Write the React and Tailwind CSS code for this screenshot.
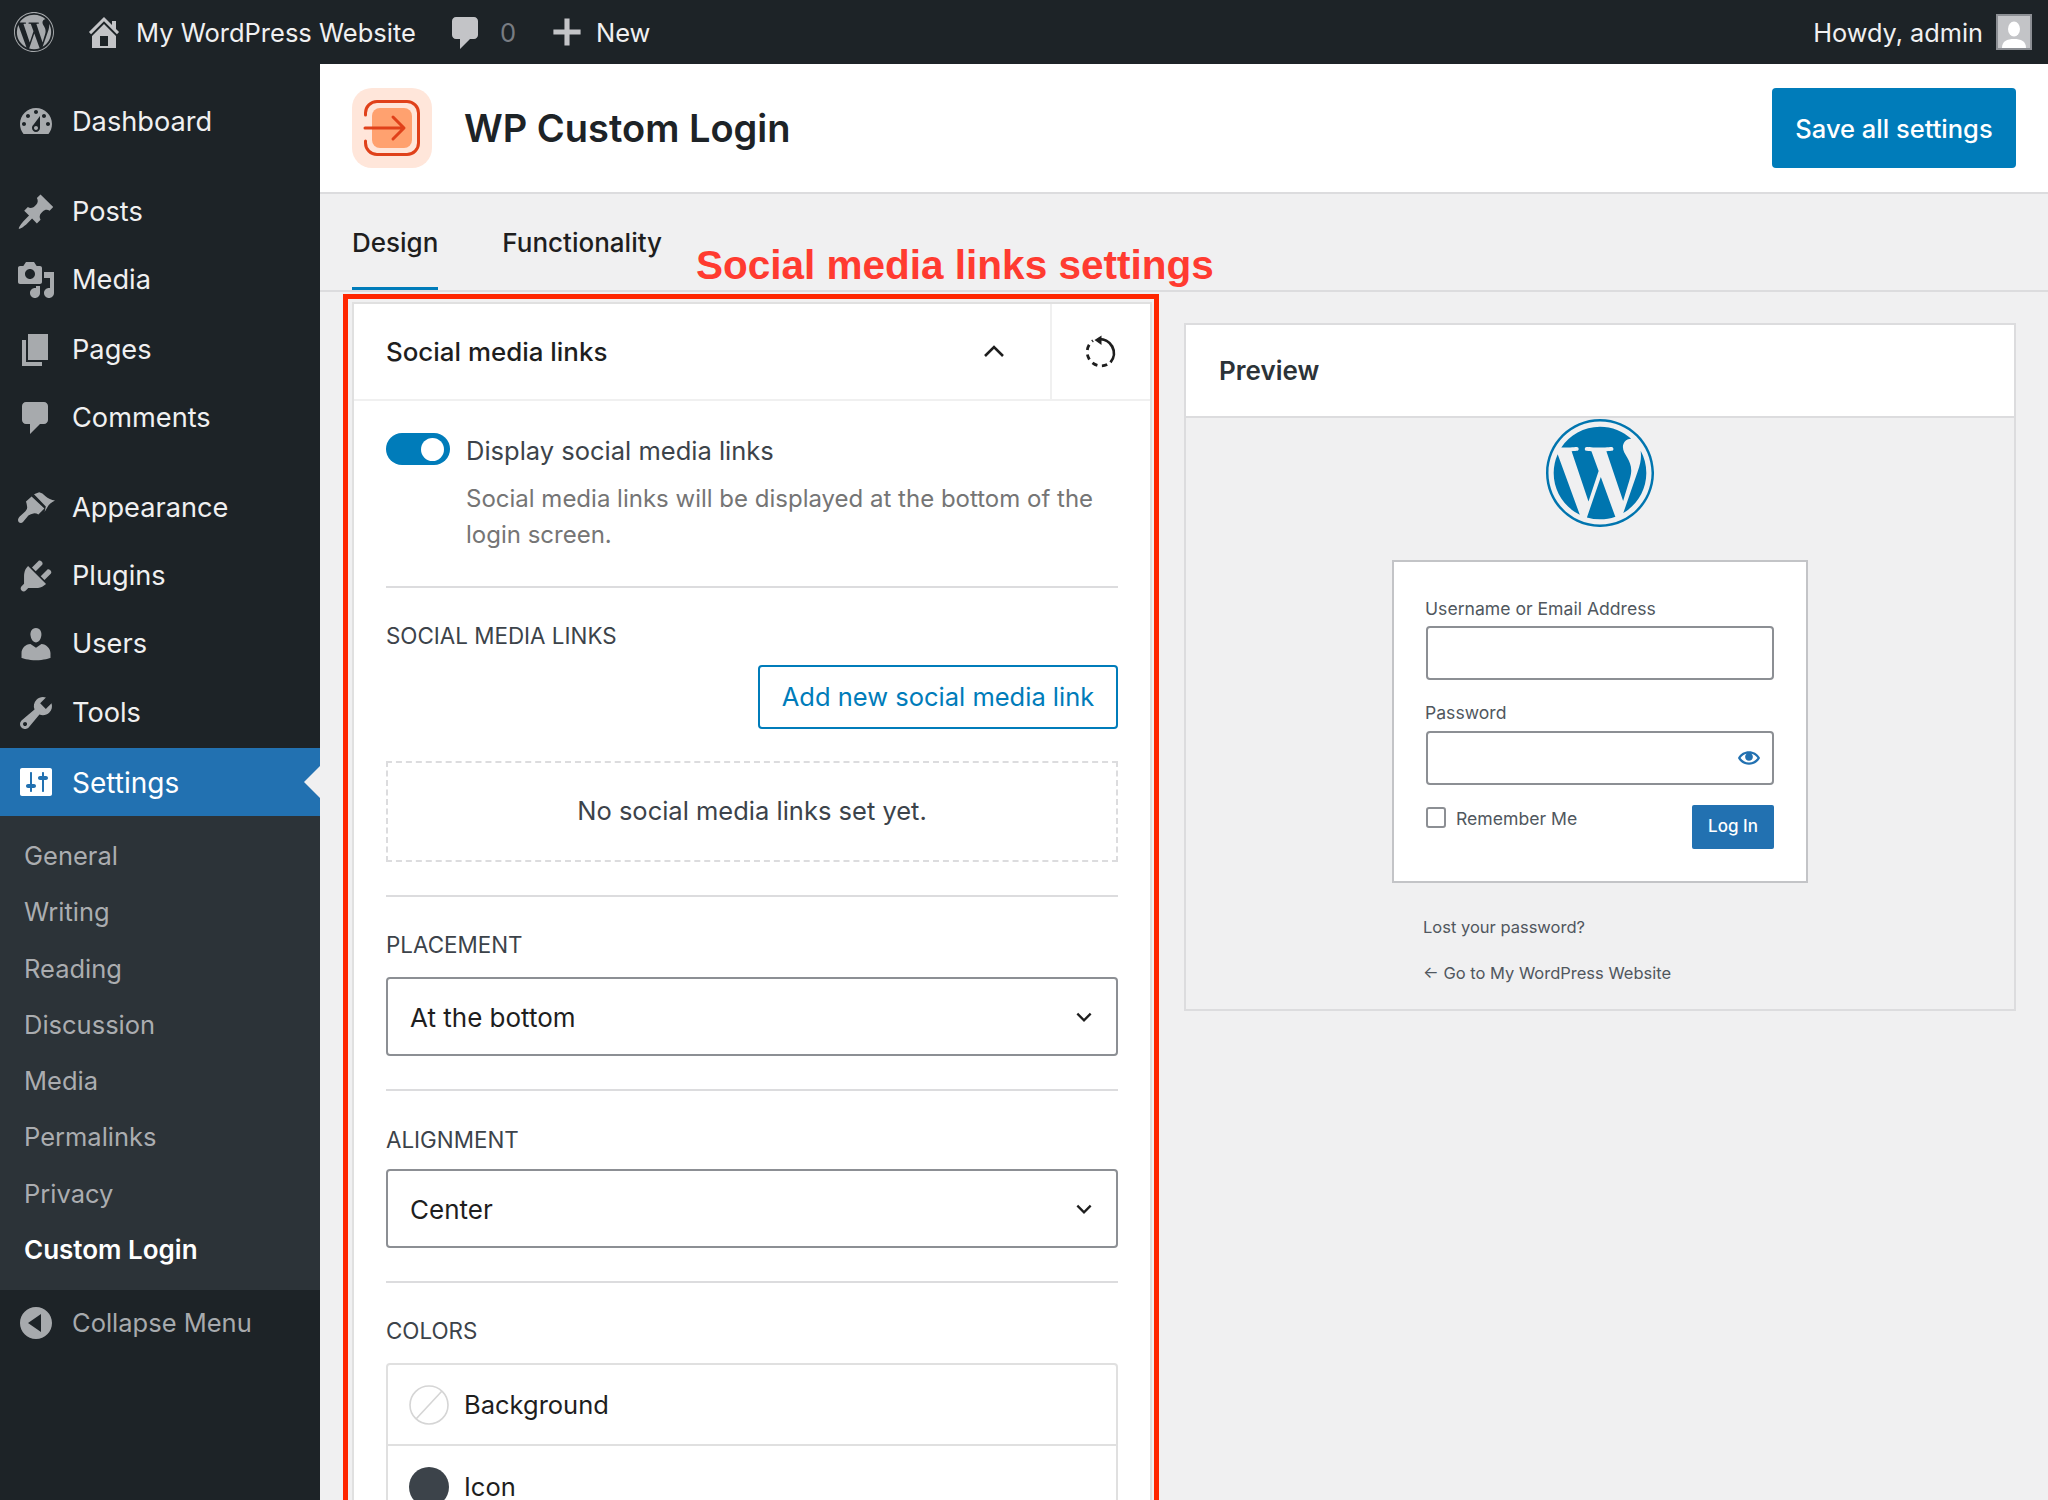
const WPLOGO = "M8.708 61.26c0 20.802 12.089 38.779 29.619 47.298L13.258 39.872a52.354 52.354 0 0 0-4.55 21.388zM96.74 58.608c0-6.495-2.333-10.993-4.334-14.494-2.664-4.329-5.161-7.995-5.161-12.324 0-4.831 3.664-9.328 8.825-9.328.233 0 .454.029.681.042-9.35-8.566-21.807-13.796-35.489-13.796-18.36 0-34.513 9.42-43.91 23.688 1.233.037 2.395.063 3.382.063 5.497 0 14.006-.667 14.006-.667 2.833-.167 3.167 3.994.337 4.329 0 0-2.847.335-6.015.501L48.2 93.547l11.501-34.493-8.188-22.434c-2.83-.166-5.511-.501-5.511-.501-2.832-.166-2.5-4.496.332-4.329 0 0 8.679.667 13.843.667 5.496 0 14.006-.667 14.006-.667 2.835-.167 3.168 3.994.337 4.329 0 0-2.853.335-6.015.501l18.992 56.494 5.242-17.517c2.272-7.269 4.001-12.49 4.001-16.989zM62.184 65.857l-15.768 45.819a52.552 52.552 0 0 0 14.846 2.141c6.12 0 11.989-1.058 17.452-2.979a4.615 4.615 0 0 1-.374-.724L62.184 65.857zM107.376 36.046c.226 1.674.354 3.471.354 5.404 0 5.333-.996 11.328-3.996 18.824l-16.053 46.413c15.624-9.111 26.133-26.038 26.133-45.426.001-9.137-2.333-17.729-6.438-25.215zM61.262 0C27.483 0 0 27.481 0 61.26c0 33.783 27.483 61.263 61.262 61.263 33.778 0 61.265-27.48 61.265-61.263C122.526 27.481 95.04 0 61.262 0zm0 119.715c-32.23 0-58.453-26.223-58.453-58.455 0-32.23 26.222-58.451 58.453-58.451 32.229 0 58.45 26.221 58.45 58.451 0 32.232-26.221 58.455-58.45 58.455z";
const P = {
  dashboard: "M3.76 16h12.48c1.1-1.37 1.76-3.11 1.76-5 0-4.42-3.58-8-8-8s-8 3.58-8 8c0 1.89.66 3.63 1.76 5zM10 4c.55 0 1 .45 1 1s-.45 1-1 1-1-.45-1-1 .45-1 1-1zM6 6c.55 0 1 .45 1 1s-.45 1-1 1-1-.45-1-1 .45-1 1-1zm8 0c.55 0 1 .45 1 1s-.45 1-1 1-1-.45-1-1 .45-1 1-1zm-5.37 5.55L12 7v6c0 1.1-.9 2-2 2s-2-.9-2-2c0-.57.24-1.08.63-1.45zM4 10c.55 0 1 .45 1 1s-.45 1-1 1-1-.45-1-1 .45-1 1-1zm12 0c.55 0 1 .45 1 1s-.45 1-1 1-1-.45-1-1 .45-1 1-1zm-5 3c0-.55-.45-1-1-1s-1 .45-1 1 .45 1 1 1 1-.45 1-1z",
  post: "M10.44 3.02l1.82-1.82 6.36 6.35-1.83 1.82c-1.05-.68-2.48-.57-3.41.36l-.75.75c-.92.93-1.04 2.35-.35 3.41l-1.83 1.82-2.41-2.41-2.8 2.79c-.42.42-3.38 2.71-3.8 2.29s1.86-3.39 2.28-3.81l2.79-2.79L4.1 9.36l1.83-1.82c1.05.69 2.48.57 3.4-.36l.75-.75c.93-.92 1.05-2.35.36-3.41z",
  media: "M13 11V4c0-.55-.45-1-1-1h-1.67L9 1H5L3.67 3H2c-.55 0-1 .45-1 1v7c0 .55.45 1 1 1h10c.55 0 1-.45 1-1zM7 4.5c1.38 0 2.5 1.12 2.5 2.5S8.38 9.5 7 9.5 4.5 8.38 4.5 7 5.62 4.5 7 4.5zM14 6h5v10.5c0 1.38-1.12 2.5-2.5 2.5S14 17.88 14 16.5s1.12-2.5 2.5-2.5c.17 0 .34.02.5.05V9h-3V6zm-4 8.05V13h2v3.5c0 1.38-1.12 2.5-2.5 2.5S7 17.88 7 16.5 8.12 14 9.5 14c.17 0 .34.02.5.05z",
  page: "M6 15V2h10v13H6zm-1 1h8v2H3V5h2v11z",
  comment: "M5 2h9c1.1 0 2 .9 2 2v7c0 1.1-.9 2-2 2h-2l-5 5v-5H5c-1.1 0-2-.9-2-2V4c0-1.1.9-2 2-2z",
  appearance: "M9 3.1L11.6 2.1Q13.3 2.3 14.6 4Q16.8 6 19.5 6.2Q16.7 7.5 15.7 9.6L14.3 12L14.9 9.3ZM7.8 4.3L14.2 10.2L11.2 13.2Q9.8 12.4 8.7 12.7Q7.4 13 6.2 13.8L3.5 17C2.6 17.9 1 17.4 1 16C1 15.2 1.5 14.6 2 14.1L4.6 11.7Q5.6 10.6 5.6 9.6Q5.4 8 5 6.8Z",
  plugins: "M13.11 4.36L9.87 7.6 8 5.73l3.24-3.24c.35-.34 1.05-.2 1.56.32.52.51.66 1.21.31 1.55zm-8 1.77l.91-1.12 9.01 9.01-1.19.84c-.71.71-2.63 1.16-3.82 1.16H6.14L4.9 17.26c-.59.59-1.54.59-2.12 0-.59-.58-.59-1.53 0-2.12l1.24-1.24v-3.88c0-1.13.4-3.19 1.09-3.89zm7.26 3.97l3.24-3.24c.34-.35 1.04-.21 1.55.31.52.51.66 1.21.31 1.55l-3.24 3.25z",
  users: "M10 9.25c-2.27 0-2.73-3.44-2.73-3.44C7 4.02 7.82 2 9.97 2c2.16 0 2.98 2.02 2.71 3.81 0 0-.41 3.44-2.68 3.44zm0 2.57L12.72 10c2.39 0 4.52 2.33 4.52 4.53v2.49s-3.65 1.13-7.24 1.13c-3.65 0-7.24-1.13-7.24-1.13v-2.49c0-2.25 1.94-4.48 4.47-4.48z",
  tools: "M16.68 9.77c-1.34 1.34-3.3 1.67-4.95.99l-5.41 6.52c-.99.99-2.59.99-3.58 0s-.99-2.59 0-3.57l6.52-5.42c-.68-1.65-.35-3.61.99-4.95 1.28-1.28 3.12-1.62 4.72-1.06l-2.89 2.89 2.82 2.82 2.86-2.87c.53 1.58.18 3.39-1.08 4.65zM3.81 16.21c.4.39 1.04.39 1.43 0 .4-.4.4-1.04 0-1.43-.39-.4-1.03-.4-1.43 0-.39.39-.39 1.03 0 1.43z",
  settings: "M18 16V4c0-.55-.45-1-1-1H3c-.55 0-1 .45-1 1v12c0 .55.45 1 1 1h14c.55 0 1-.45 1-1zM8 11h1c.55 0 1 .45 1 1s-.45 1-1 1H8v1.5c0 .28-.22.5-.5.5s-.5-.22-.5-.5V13H6c-.55 0-1-.45-1-1s.45-1 1-1h1V5.5c0-.28.22-.5.5-.5s.5.22.5.5V11zm5-2h-1c-.55 0-1-.45-1-1s.45-1 1-1h1V5.5c0-.28.22-.5.5-.5s.5.22.5.5V7h1c.55 0 1 .45 1 1s-.45 1-1 1h-1v5.5c0 .28-.22.5-.5.5s-.5-.22-.5-.5V9z",
  collapse: "M18 10c0-4.42-3.58-8-8-8s-8 3.58-8 8 3.58 8 8 8 8-3.58 8-8zm-5.5-4.5v9L6 10z",
  home: "M16 8.5l1.53 1.53-1.06 1.06L10 4.62l-6.47 6.47-1.06-1.06L10 2.5l4 4v-2h2v4zm-6-2.46l6 5.99V18H4v-5.97zM12 17v-5H8v5h4z",
  plus: "M8.5 2h3v6.5H18v3h-6.5V18h-3v-6.5H2v-3h6.5z",
  eye: "M19.7 9.4C17.7 6 14 3.9 10 3.9S2.3 6 .3 9.4L0 10l.3.6c2 3.4 5.7 5.5 9.7 5.5s7.7-2.1 9.7-5.5l.3-.6-.3-.6zM10 14.1c-3.1 0-6-1.6-7.7-4.1C3.6 8 5.7 6.6 8 6.1c-.9.6-1.5 1.7-1.5 2.9 0 1.9 1.6 3.5 3.5 3.5s3.5-1.6 3.5-3.5c0-1.2-.6-2.3-1.5-2.9 2.3.5 4.4 1.9 5.7 3.9-1.7 2.5-4.6 4.1-7.7 4.1z",
};

const Dash = ({ d, className }) => (
  <svg viewBox="0 0 20 20" fill="currentColor" className={className} fillRule="evenodd">
    <path d={d} />
  </svg>
);

const WpLogo = ({ className }) => (
  <svg viewBox="0 0 122.52 122.52" fill="currentColor" className={className}>
    <path d={WPLOGO} />
  </svg>
);

function MenuItem({ icon, label, className = "" }) {
  return (
    <div className={"flex h-[68px] items-center " + className}>
      <div className="flex w-[72px] justify-center">
        <Dash d={icon} className="h-[40px] w-[40px] text-[#a7aaad]" />
      </div>
      <span className="pt-[1px] text-[27.2px] text-[#f0f0f1]">{label}</span>
    </div>
  );
}

function Sub({ label, active }) {
  return (
    <div className={"flex h-[56.25px] items-center pl-[24px] " + (active ? "text-[26px] font-semibold text-white" : "text-[25.5px] text-[#c3c4c7]/85")}>
      {label}
    </div>
  );
}

function AdminBar() {
  return (
    <header className="flex h-[64px] shrink-0 items-center bg-[#1d2327] text-[25.5px] text-[#f0f0f1]">
      <WpLogo className="ml-[14px] h-[40px] w-[40px] text-[#a7aaad]" />
      <Dash d={P.home} className="ml-[30px] h-[40px] w-[40px] text-[#c3c4c7]" />
      <span className="ml-[12px] pt-[2px]">My WordPress Website</span>
      <Dash d={P.comment} className="ml-[30px] mt-[2px] h-[40px] w-[40px] text-[#c3c4c7]" />
      <span className="ml-[14px] pt-[2px] text-[#787c82]">0</span>
      <Dash d={P.plus} className="ml-[34px] h-[34px] w-[34px] text-[#c3c4c7]" />
      <span className="ml-[12px] pt-[2px]">New</span>
      <span className="ml-auto pt-[2px] text-[25.3px]">Howdy, admin</span>
      <div className="ml-[13px] mr-[16px] flex h-[36px] w-[36px] items-end justify-center overflow-hidden border-2 border-[#8c8f94] bg-[#c3c4c7]">
        <svg viewBox="0 0 32 32" className="h-[32px] w-[32px]" fill="#fff">
          <ellipse cx="16" cy="13" rx="6" ry="7.5" />
          <path d="M4 32c0-7 5-9 12-9s12 2 12 9z" />
        </svg>
      </div>
    </header>
  );
}

function Sidebar() {
  return (
    <aside className="flex w-[320px] shrink-0 flex-col bg-[#1d2327]">
      <div className="mt-[24px]"><MenuItem icon={P.dashboard} label="Dashboard" /></div>
      <div className="mt-[22px]">
        <MenuItem icon={P.post} label="Posts" />
        <MenuItem icon={P.media} label="Media" />
        <MenuItem icon={P.page} label="Pages" className="mt-[2px]" />
        <MenuItem icon={P.comment} label="Comments" />
      </div>
      <div className="mt-[22px]">
        <MenuItem icon={P.appearance} label="Appearance" />
        <MenuItem icon={P.plugins} label="Plugins" />
        <MenuItem icon={P.users} label="Users" />
        <MenuItem icon={P.tools} label="Tools" className="mt-[1px]" />
      </div>
      <div className="relative mt-[1px] flex h-[68px] items-center bg-[#2271b1]">
        <div className="flex w-[72px] justify-center">
          <Dash d={P.settings} className="h-[40px] w-[40px] text-white" />
        </div>
        <span className="pt-[1px] text-[28px] text-white">Settings</span>
        <div className="absolute right-0 top-1/2 h-0 w-0 -translate-y-1/2 border-y-[16px] border-r-[16px] border-y-transparent border-r-[#f0f0f1]" />
      </div>
      <div className="bg-[#2c3338] py-[12px]">
        {["General", "Writing", "Reading", "Discussion", "Media", "Permalinks", "Privacy"].map((s) => (
          <Sub key={s} label={s} />
        ))}
        <Sub label="Custom Login" active />
      </div>
      <div className="flex h-[66px] items-center">
        <div className="flex w-[72px] justify-center">
          <Dash d={P.collapse} className="h-[40px] w-[40px] text-[#a7aaad]" />
        </div>
        <span className="text-[25.5px] text-[#a7aaad]">Collapse Menu</span>
      </div>
    </aside>
  );
}

function Logo() {
  return (
    <div className="h-[80px] w-[80px] rounded-[20px] bg-[#ffe6da]">
      <svg viewBox="0 0 80 80" className="h-[80px] w-[80px]" fill="none">
        <rect x="20" y="20" width="40" height="40" rx="8" fill="#ffa16f" />
        <path d="M13.5 27V25a11.5 11.5 0 0 1 11.5-11.5h30a11.5 11.5 0 0 1 11.5 11.5v30a11.5 11.5 0 0 1-11.5 11.5H25a11.5 11.5 0 0 1-11.5-11.5v-2" stroke="#e0411a" strokeWidth="3" strokeLinecap="round" />
        <path d="M13 40h38.5M41 29l11 11-11 11" stroke="#e0411a" strokeWidth="3" strokeLinecap="round" strokeLinejoin="round" />
      </svg>
    </div>
  );
}

const Chevron = () => (
  <svg viewBox="0 0 24 24" className="h-[24px] w-[24px]" fill="none" stroke="#1e1e1e" strokeWidth="2.6">
    <path d="M3 16l9-9 9 9" />
  </svg>
);

function Label({ children }) {
  return <div className="h-[34px] text-[22.4px] leading-[34px] text-[#3c434a]">{children}</div>;
}

function Select({ value, className = "" }) {
  return (
    <div className={"flex h-[79px] items-center justify-between rounded-[4px] border-2 border-[#8c8f94] bg-white pl-[22px] pr-[22px] text-[26px] text-[#1e1e1e] " + className}>
      <span className="pt-[1px]">{value}</span>
      <svg viewBox="0 0 24 24" className="h-[20px] w-[20px]" fill="none" stroke="#1e1e1e" strokeWidth="2.8">
        <path d="M4 8l8 8 8-8" />
      </svg>
    </div>
  );
}

const Rule = () => <div className="h-[2px] bg-[#dcdcde]" />;

function SettingsCard() {
  return (
    <section className="h-[1300px] w-[800px] shrink-0 border-2 border-[#e0e0e0] bg-white">
      <div className="flex h-[97px] items-stretch border-b-2 border-[#f0f0f0]">
        <div className="flex flex-1 items-center justify-between pl-[32px] pr-[44px]">
          <span className="pt-[1px] text-[25.9px] font-medium text-[#1e1e1e]">Social media links</span>
          <Chevron />
        </div>
        <div className="flex w-[100px] items-center justify-center border-l-2 border-[#f0f0f0]">
          <svg viewBox="0 0 34 34" className="h-[34px] w-[34px]" fill="none" stroke="#1e1e1e" strokeWidth="2.8">
            <path d="M14 4.3A14 14 0 0 1 26.5 27.3" />
            <path d="M23.2 29.6A14 14 0 0 1 9 5.6" strokeDasharray="5.5 4.5" />
            <path d="M10.5 5L17.5 0.5V10Z" fill="#1e1e1e" stroke="none" />
          </svg>
        </div>
      </div>
      <div className="px-[32px]">
        <div className="flex gap-[16px] pb-[33px] pt-[32px]">
          <div className="flex h-[32px] w-[64px] items-center justify-end rounded-full bg-[#007cba] pr-[6px]">
            <div className="h-[23px] w-[23px] rounded-full bg-white" />
          </div>
          <div className="min-w-0 flex-1">
            <div className="h-[36px] text-[25.5px] leading-[36px] text-[#3c434a]">Display social media links</div>
            <p className="mt-[12px] text-[24px] leading-[36px] text-[#757575]">
              Social media links will be displayed at the bottom of the login screen.
            </p>
          </div>
        </div>
        <Rule />
        <div className="pb-[33px] pt-[31px]">
          <Label>SOCIAL MEDIA LINKS</Label>
          <div className="mt-[12px] flex justify-end">
            <div className="flex h-[64px] w-[360px] items-center justify-center rounded-[4px] border-2 border-[#007cba] text-[25.5px] text-[#007cba]">
              Add new social media link
            </div>
          </div>
          <div className="mt-[32px] flex h-[101px] items-center justify-center border-2 border-dashed border-[#dcdcde] text-[25.5px] text-[#3c434a]">
            No social media links set yet.
          </div>
        </div>
        <Rule />
        <div className="pb-[33px] pt-[31px]">
          <Label>PLACEMENT</Label>
          <Select value="At the bottom" className="mt-[15px]" />
        </div>
        <Rule />
        <div className="pb-[33px] pt-[32px]">
          <Label>ALIGNMENT</Label>
          <Select value="Center" className="mt-[12px]" />
        </div>
        <Rule />
        <div className="pt-[31px]">
          <Label>COLORS</Label>
          <div className="mt-[15px] rounded-[4px] border-2 border-[#e0e0e0]">
            <div className="flex h-[81px] items-center gap-[15px] border-b-2 border-[#e0e0e0] pl-[21px] text-[25.5px] text-[#1e1e1e]">
              <svg viewBox="0 0 40 40" className="h-[40px] w-[40px]" fill="none" stroke="#d5d5d5" strokeWidth="1.6">
                <circle cx="20" cy="20" r="19" />
                <path d="M33 6L7 34" />
              </svg>
              <span className="pt-[1px]">Background</span>
            </div>
            <div className="flex h-[81px] items-center gap-[15px] pl-[21px] text-[25.5px] text-[#1e1e1e]">
              <div className="h-[40px] w-[40px] rounded-full bg-[#3c434a]" />
              <span className="pt-[1px]">Icon</span>
            </div>
          </div>
        </div>
      </div>
    </section>
  );
}

function PreviewCard() {
  return (
    <section className="mt-[21px] h-[688px] w-[832px] shrink-0 border-2 border-[#dcdcde] bg-[#f0f0f1]">
      <div className="flex h-[93px] items-center border-b-2 border-[#dcdcde] bg-white pl-[33px] text-[26px] font-semibold text-[#2c3338]">
        Preview
      </div>
      <div className="flex flex-col items-center pt-[1px]">
        <WpLogo className="h-[108px] w-[108px] text-[#0075af]" />
        <div className="mt-[33px] h-[323px] w-[416px] border-2 border-[#c3c4c7] bg-white px-[32px] pt-[34px] text-[17.6px] text-[#50575e]">
          <div className="-ml-[1px] h-[26px] leading-[26px]">Username or Email Address</div>
          <div className="mt-[4px] h-[54px] rounded-[4px] border-2 border-[#8c8f94]" />
          <div className="-ml-[1px] mt-[20px] h-[26px] leading-[26px]">Password</div>
          <div className="mt-[5px] flex h-[54px] items-center justify-end rounded-[4px] border-2 border-[#8c8f94] pr-[12px]">
            <Dash d={P.eye} className="h-[22px] w-[22px] text-[#2271b1]" />
          </div>
          <div className="mt-[20px] flex items-start">
            <div className="mt-[2px] h-[21px] w-[20px] rounded-[3px] border-2 border-[#8c8f94]" />
            <span className="ml-[10px] mt-[2px] leading-[24px]">Remember Me</span>
            <div className="ml-auto flex h-[44px] w-[82px] items-center justify-center rounded-[2px] bg-[#2271b1] text-[17px] font-medium text-white">
              Log In
            </div>
          </div>
        </div>
        <div className="w-[416px] pl-[31px] text-[16.5px] text-[#50575e]">
          <div className="mt-[31px] h-[26px] leading-[26px]">Lost your password?</div>
          <div className="mt-[20px] h-[26px] leading-[26px]">← Go to My WordPress Website</div>
        </div>
      </div>
    </section>
  );
}

export default function App() {
  return (
    <div className="flex h-[1500px] w-[2048px] flex-col overflow-hidden bg-[#f0f0f1] font-['Inter',sans-serif]">
      <AdminBar />
      <div className="flex min-h-0 flex-1">
        <Sidebar />
        <main className="relative min-w-0 flex-1">
          <div className="flex h-[130px] items-center justify-between border-b-2 border-[#dcdcde] bg-white pl-[32px] pr-[32px]">
            <div className="flex items-center gap-[32px]">
              <Logo />
              <h1 className="text-[38px] font-semibold text-[#1d2327]">WP Custom Login</h1>
            </div>
            <div className="flex h-[80px] w-[244px] items-center justify-center rounded-[4px] bg-[#007cba] pt-[2px] text-[25.5px] font-medium text-white">
              Save all settings
            </div>
          </div>
          <nav className="flex h-[98px] gap-[64px] border-b-2 border-[#dcdcde] pl-[32px] text-[26px] font-medium text-[#1e1e1e]">
            <div className="flex h-[96px] items-center border-b-[3px] border-[#007cba] pt-[4px]">Design</div>
            <div className="flex h-[96px] items-center pt-[1px]">Functionality</div>
          </nav>
          <div className="flex gap-[32px] pl-[32px] pt-[10px]">
            <SettingsCard />
            <PreviewCard />
          </div>
          <div className="absolute left-[376px] top-[175px] font-['Liberation_Sans',sans-serif] text-[40.5px] font-bold leading-[52px] text-[#ff3b30]">
            Social media links settings
          </div>
          <div className="absolute left-[23px] top-[230px] h-[1400px] w-[816px] border-[5px] border-[#ff2600]" />
        </main>
      </div>
    </div>
  );
}
